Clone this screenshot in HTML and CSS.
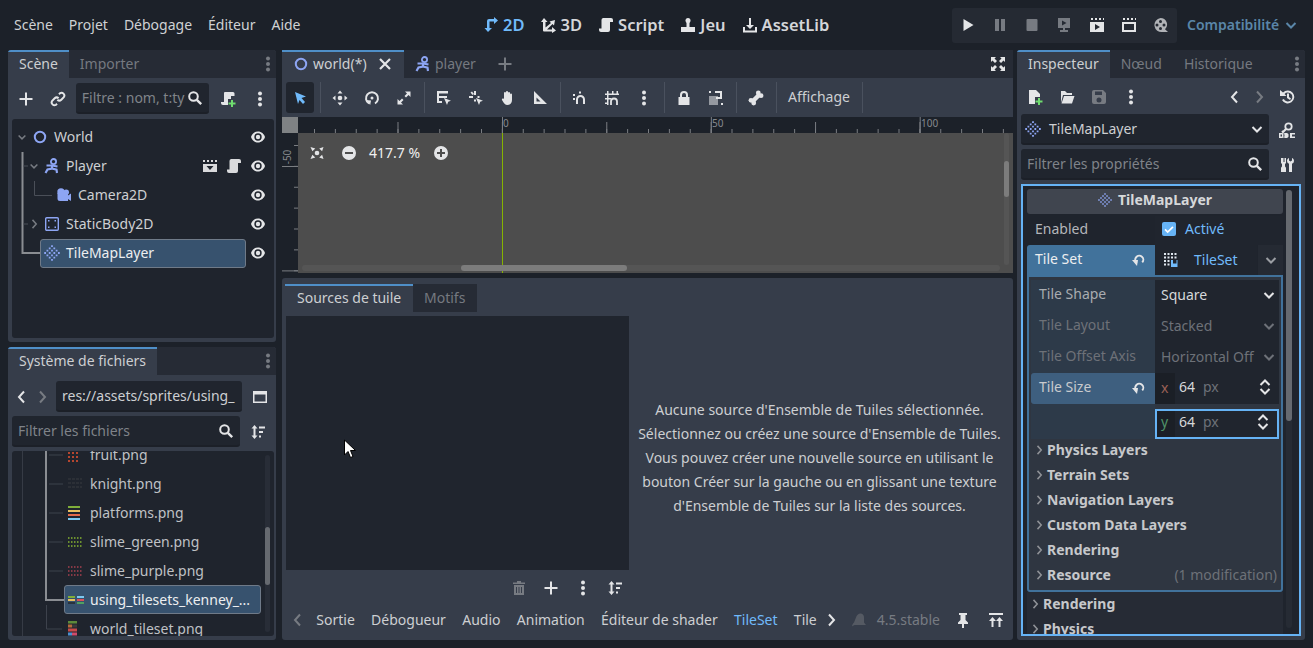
FILE: index.html
```html
<!DOCTYPE html>
<html lang="fr">
<head>
<meta charset="utf-8">
<title>world - Godot Engine</title>
<link rel="stylesheet" href="styles.css">
</head>
<body>
<svg class="defs" aria-hidden="true">
  <symbol id="i-plus" viewBox="0 0 16 16"><path d="M7 1.500h2V7h5.500v2H9v5.500H7V9H1.500V7H7z"/></symbol>
  <symbol id="i-link" viewBox="0 0 16 16"><path d="M9 3.200l.9-.9a2.800 2.800 0 0 1 3.900 3.900L11.300 8.700a2.800 2.800 0 0 1-3.900 0M7 12.800l-.9.9a2.800 2.800 0 0 1-3.900-3.900L4.700 7.300a2.800 2.800 0 0 1 3.900 0" fill="none" stroke="currentColor" stroke-width="2"/></symbol>
  <symbol id="i-search" viewBox="0 0 16 16"><circle cx="6.500" cy="6.500" r="4.300" fill="none" stroke="currentColor" stroke-width="2"/><path d="M9.800 9.800l4.400 4.400" fill="none" stroke="currentColor" stroke-width="2.400"/></symbol>
  <symbol id="i-dots" viewBox="0 0 16 16"><circle cx="8" cy="2.500" r="2"/><circle cx="8" cy="8" r="2"/><circle cx="8" cy="13.500" r="2"/></symbol>
  <symbol id="i-eye" viewBox="0 0 16 16"><path fill-rule="evenodd" d="M8 2.500c3.500 0 6 2.400 7 5.500-1 3.100-3.500 5.500-7 5.500S2 11.100 1 8c1-3.100 3.500-5.500 7-5.500zM8 4.300A3.700 3.700 0 1 0 8 11.700 3.700 3.700 0 0 0 8 4.300z"/><circle cx="8" cy="8" r="2.200"/></symbol>
  <symbol id="i-node" viewBox="0 0 16 16"><circle cx="8" cy="8" r="5.200" fill="none" stroke="currentColor" stroke-width="2"/></symbol>
  <symbol id="i-char" viewBox="0 0 16 16"><circle cx="9.500" cy="3.600" r="2.600" fill="none" stroke="currentColor" stroke-width="1.800"/><path d="M2.500 7.500H8l5.500 1M8 7.500v3L3.500 11.500 1.500 15M8 10.500l4.500 1.200.5 3.300" fill="none" stroke="currentColor" stroke-width="2.200"/></symbol>
  <symbol id="i-camera" viewBox="0 0 16 16"><circle cx="5" cy="5" r="3.700"/><circle cx="10.200" cy="5.200" r="2.800"/><path d="M1.500 6h10.500v2.500L15 6.500v7.500l-3-2V14H4a2.500 2.500 0 0 1-2.500-2.500z"/></symbol>
  <symbol id="i-static" viewBox="0 0 16 16"><rect x="1.700" y="1.700" width="12.600" height="12.600" rx="1" fill="none" stroke="currentColor" stroke-width="1.400"/><path d="M4 4h1.500v1.500H4zM10.500 4H12v1.500h-1.500zM4 10.500h1.500V12H4zM10.500 10.500H12V12h-1.500z"/></symbol>
  <symbol id="i-tiles" viewBox="0 0 16 16"><path d="M.2 7.100h1.800v1.800H.2zM2.500 4.800h1.800v1.800H2.500zM2.500 9.400h1.800v1.800H2.500zM4.800 2.500h1.800v1.800H4.800zM4.800 7.100h1.800v1.800H4.800zM4.800 11.700h1.800v1.800H4.800zM7.100 .2h1.800V2H7.100zM7.100 4.800h1.800v1.800H7.100zM7.100 9.400h1.800v1.800H7.100zM7.100 14h1.800v1.800H7.100zM9.400 2.500h1.800v1.800H9.400zM9.400 7.100h1.800v1.800H9.400zM9.400 11.700h1.800v1.800H9.400zM11.700 4.800h1.800v1.800h-1.800zM11.700 9.400h1.800v1.800h-1.800zM14 7.100h1.800v1.800H14z"/></symbol>
  <symbol id="i-script" viewBox="0 0 16 16"><path d="M5 1h8a2 2 0 0 1 2 2v2h-3v8a2 2 0 0 1-2 2H3a2 2 0 0 1-2-2v-1.500h2.500V3A2 2 0 0 1 5 1z"/></symbol>
  <symbol id="i-clap" viewBox="0 0 16 16"><path d="M1 2h2v2H1zM5 2h2v2H5zM9 2h2v2H9zM13 2h2v2h-2zM1 6h14v8H1zM4.500 8l3.500 4 3.500-4z" fill-rule="evenodd"/></symbol>
  <symbol id="i-left" viewBox="0 0 16 16"><path d="M10 2.500L5 8l5 5.500" fill="none" stroke="currentColor" stroke-width="2"/></symbol>
  <symbol id="i-right" viewBox="0 0 16 16"><path d="M6 2.500L11 8l-5 5.500" fill="none" stroke="currentColor" stroke-width="2"/></symbol>
  <symbol id="i-down" viewBox="0 0 16 16"><path d="M3.500 6l4.500 4.500L12.500 6" fill="none" stroke="currentColor" stroke-width="2"/></symbol>
  <symbol id="i-window" viewBox="0 0 16 16"><path fill-rule="evenodd" d="M1 2h14v12H1zM2.500 5.500v7h11v-7z"/></symbol>
  <symbol id="i-sort" viewBox="0 0 16 16"><path d="M4.500 1L7.500 4.500H5.500v7h2l-3 3.500-3-3.500h2v-7h-2zM9 2.500h6v2H9zM9 7h4v2H9zM9 11.500h2v2H9z"/></symbol>
  <symbol id="i-close" viewBox="0 0 16 16"><path d="M3 3l10 10M13 3L3 13" fill="none" stroke="currentColor" stroke-width="2.200"/></symbol>
  <symbol id="i-full" viewBox="0 0 16 16"><path d="M1 1h5L4.500 2.500 7 5 5 7 2.500 4.500 1 6zM15 1v5l-1.500-1.500L11 7 9 5l2.500-2.500L10 1zM1 15v-5l1.500 1.500L5 9l2 2-2.500 2.500L6 15zM15 15h-5l1.500-1.500L9 11l2-2 2.500 2.500L15 10z"/></symbol>
  <symbol id="i-arrow" viewBox="0 0 16 16"><path d="M3 2l11 4.500-4.500 1.500 3.500 4-2 2-3.500-4L6 14z"/></symbol>
  <symbol id="i-move" viewBox="0 0 16 16"><path d="M8 .5L10.500 3.500h-5zM8 15.500l-2.500-3h5zM.5 8l3-2.500v5zM15.500 8l-3 2.500v-5z"/><circle cx="8" cy="8" r="2.300"/></symbol>
  <symbol id="i-rotate" viewBox="0 0 16 16"><path d="M5 13.500a6 6 0 1 1 6 0" fill="none" stroke="currentColor" stroke-width="2"/><path d="M2 10l5 .5-.8 4.500z"/><circle cx="8" cy="8" r="1.500"/></symbol>
  <symbol id="i-scale" viewBox="0 0 16 16"><path d="M9 1.500h5.500V7L12.500 5 10 7.500 8.500 6 11 3.500zM7 14.500H1.500V9L3.500 11 6 8.500 7.500 10 5 12.500z"/></symbol>
  <symbol id="i-list" viewBox="0 0 16 16"><path fill-rule="evenodd" d="M1 1h11v2.500H3v2.500h8v2H3v3h3v2H1z"/><path d="M8 8l7 2.800-2.800.9L11 15z"/></symbol>
  <symbol id="i-pivot" viewBox="0 0 16 16"><path d="M6 1h2v4H6zM1 6h4v2H1zM9.500 6h2v2h-2zM6 9.500h2v2H6zM2.500 2.500l1.500-1 2 2.500-1.500 1zM8 8l7 2.800-2.800.9L11 15z"/></symbol>
  <symbol id="i-hand" viewBox="0 0 16 16"><path d="M4 7V3a1 1 0 0 1 2 0V2a1 1 0 0 1 2 0v1a1 1 0 0 1 2 0v1.500a1 1 0 0 1 2 0V10c0 3-2 5-4.500 5S4 13.500 2 10c-.5-1 1-2 2-1z"/></symbol>
  <symbol id="i-ruler" viewBox="0 0 16 16"><path fill-rule="evenodd" d="M2 1l13 13H2zM4.500 7.500v4h4z"/></symbol>
  <symbol id="i-snap" viewBox="0 0 16 16"><path d="M5 14V9.500a3.500 3.500 0 0 1 7 0V14" fill="none" stroke="currentColor" stroke-width="2"/><path d="M1 4h2v2H1zM1 8h2v2H1zM7 1.500h2v2H7z"/></symbol>
  <symbol id="i-gridsnap" viewBox="0 0 16 16"><path d="M3 1h1.500v14H3zM8 1h1.500v3H8zM12.500 1H14v3h-1.500zM1 3.500h14V5H1zM1 8h6v1.500H1zM1 12.500h3.500V14H1z"/><path d="M7 15v-3.500a3 3 0 0 1 6 0V15" fill="none" stroke="currentColor" stroke-width="1.800"/></symbol>
  <symbol id="i-lock" viewBox="0 0 16 16"><path fill-rule="evenodd" d="M8 1a4 4 0 0 1 4 4v2h1.500v8h-11V7H4V5a4 4 0 0 1 4-4zM8 3a2 2 0 0 0-2 2v2h4V5a2 2 0 0 0-2-2z"/></symbol>
  <symbol id="i-group" viewBox="0 0 16 16"><path d="M1 6h9v9H1z" opacity=".55"/><path d="M1 1h2v2H1zM7 1h7v8H8V7h4V3H7zM13 13h2v2h-2z"/></symbol>
  <symbol id="i-bone" viewBox="0 0 16 16"><path d="M4.500 11.500l7-7" stroke="currentColor" stroke-width="4.500"/><circle cx="10.300" cy="3" r="2.400"/><circle cx="13" cy="5.700" r="2.400"/><circle cx="3" cy="10.300" r="2.400"/><circle cx="5.700" cy="13" r="2.400"/></symbol>
  <symbol id="i-center" viewBox="0 0 16 16"><path d="M1.500 2l4.800 1.400-2.900 2.900zM14.500 2l-1.400 4.300-2.900-2.900zM1.500 14l1.900-4.300 2.900 2.900zM14.500 14l-4.300-1.400 2.900-2.900z"/><circle cx="8" cy="8" r="2.300"/></symbol>
  <symbol id="i-zoomout" viewBox="0 0 16 16"><path fill-rule="evenodd" d="M8 1a7 7 0 1 1 0 14A7 7 0 0 1 8 1zM4 7v2h8V7z"/></symbol>
  <symbol id="i-zoomin" viewBox="0 0 16 16"><path fill-rule="evenodd" d="M8 1a7 7 0 1 1 0 14A7 7 0 0 1 8 1zM7 4v3H4v2h3v3h2V9h3V7H9V4z"/></symbol>
  <symbol id="i-2d" viewBox="0 0 16 16"><path d="M5 15l-3.500-4H4V4a2 2 0 0 1 2-2h5V0l4 3.500L11 7V4.500H6.500V11H9z"/></symbol>
  <symbol id="i-3d" viewBox="0 0 16 16"><path d="M3 1l3.500 4H4.500v5.500L10 6 8.500 4.500 14 3l-1 5.500-1.500-1.500L6 12.500h5V10l4 3.500-4 2.500v-1.500H3a1 1 0 0 1-1-1V5H0z"/></symbol>
  <symbol id="i-game" viewBox="0 0 16 16"><circle cx="8" cy="3.500" r="2.500"/><path d="M6.500 5h3v5h-3zM1 10h14v5H1z"/></symbol>
  <symbol id="i-asset" viewBox="0 0 16 16"><path d="M7 1h2v7h3l-4 4-4-4h3zM1 10h2v3.500h10V10h2v5.500H1z"/></symbol>
  <symbol id="i-play" viewBox="0 0 16 16"><path d="M3.500 2l10 6-10 6z"/></symbol>
  <symbol id="i-pause" viewBox="0 0 16 16"><path d="M3 2h4v12H3zM9 2h4v12H9z"/></symbol>
  <symbol id="i-stop" viewBox="0 0 16 16"><rect x="2.500" y="2" width="11" height="12" rx="1"/></symbol>
  <symbol id="i-remote" viewBox="0 0 16 16"><path fill-rule="evenodd" d="M2 1h12v10H9v2h3v2H4v-2h3v-2H2zM6 3.500v5l4.500-2.500z"/></symbol>
  <symbol id="i-clapplay" viewBox="0 0 16 16"><path fill-rule="evenodd" d="M2 1h2v2H2zM6 1h2v2H6zM10 1h2v2h-2zM14 1h1v2h-1zM1 5h14v10H1zM6 7v6l5-3z"/></symbol>
  <symbol id="i-clapsq" viewBox="0 0 16 16"><path fill-rule="evenodd" d="M2 1h2v2H2zM6 1h2v2H6zM10 1h2v2h-2zM14 1h1v2h-1zM1 5h14v10H1zM3 7v6h10V7z"/></symbol>
  <symbol id="i-movie" viewBox="0 0 16 16"><path fill-rule="evenodd" d="M7.500 1a6.500 6.500 0 0 1 4.500 11.200l3 2.800H9.500a6.500 6.500 0 1 1-2-14zM7.500 3a1.500 1.500 0 1 0 0 3 1.500 1.500 0 0 0 0-3zM4 6.500a1.500 1.500 0 1 0 0 3 1.500 1.500 0 0 0 0-3zM11 6.500a1.500 1.500 0 1 0 0 3 1.500 1.500 0 0 0 0-3zM7.500 10a1.500 1.500 0 1 0 0 3 1.500 1.500 0 0 0 0-3z"/></symbol>
  <symbol id="i-filenew" viewBox="0 0 16 16"><path d="M2 1h7l4 4v3H8v7H2z"/><path d="M11 9h2v2.500h2.500v2H13V16h-2v-2.500H8.500v-2H11z" fill="#6fdc6f"/></symbol>
  <symbol id="i-scriptnew" viewBox="0 0 16 16"><path d="M5 1h8a1.500 1.500 0 0 1 1.500 1.500V5H11v3H8v6H3a2 2 0 0 1-2-2v-1h3V2a1 1 0 0 1 1-1z"/><path d="M11 9h2v2.500h2.500v2H13V16h-2v-2.500H8.500v-2H11z" fill="#6fdc6f"/></symbol>
  <symbol id="i-open" viewBox="0 0 16 16"><path fill-rule="evenodd" d="M2 2h4l2 2h5v2H4L2 14zM5 7h10.500L13 14.500H2.500z"/></symbol>
  <symbol id="i-save" viewBox="0 0 16 16"><path fill-rule="evenodd" d="M1 3a2 2 0 0 1 2-2h9l3 3v9a2 2 0 0 1-2 2H3a2 2 0 0 1-2-2zM4 2.500v3.500h7V2.500zM8 8.500a2.500 2.500 0 1 0 0 5 2.500 2.500 0 0 0 0-5z"/></symbol>
  <symbol id="i-history" viewBox="0 0 16 16"><path d="M4 3.500A6.500 6.500 0 1 1 3 11l1.800-1A4.500 4.500 0 1 0 5.500 5L7.500 7H1V1z"/><path d="M8 4.500h2V8l2 1.500-1 1.500-3-2z"/></symbol>
  <symbol id="i-doc" viewBox="0 0 16 16"><circle cx="9.500" cy="4.500" r="3.200" fill="none" stroke="currentColor" stroke-width="1.800"/><path d="M7 7L4 10l-1-1" fill="none" stroke="currentColor" stroke-width="2"/><path d="M0 11h3a2 2 0 0 1 0 5H0zM1.500 12.500v2H3v-2zM6 11h1.500a2 2 0 0 1 2 2.500A2 2 0 0 1 7.500 16H6a2 2 0 0 1-1.500-2.500A2 2 0 0 1 6 11zM11 11h5v1.500h-3v2h3V16h-5z" fill-rule="evenodd"/></symbol>
  <symbol id="i-tools" viewBox="0 0 16 16"><path d="M3 1h1.500v4h1V1H7v5L6 7v2.500a2 2 0 0 1 1 1.700V15H2v-3.800a2 2 0 0 1 1-1.700V7L2 6V1zM10 1v2.500l1.500 1L13 3.500V1c1.500.5 2 2 2 3a3 3 0 0 1-2 2.800V15h-3V6.800A3 3 0 0 1 8 4c0-1 .5-2.500 2-3z"/></symbol>
  <symbol id="i-revert" viewBox="0 0 16 16"><path d="M5 12.500A5 5 0 1 1 12 12l-1.500-1.300A3 3 0 1 0 6.500 11z"/><path d="M1 9h6l-1 6z"/></symbol>
  <symbol id="i-check" viewBox="0 0 16 16"><path d="M3.500 8.500l3 3 6-6" fill="none" stroke="#fff" stroke-width="2"/></symbol>
  <symbol id="i-tileset" viewBox="0 0 16 16"><path d="M1 1h2v2H1zM4.500 1h2v2h-2zM8 1h2v2H8zM11.500 1h2v2h-2zM1 4.500h2v2H1zM4.500 4.500h2v2h-2zM8 4.500h2v2H8zM11.500 4.500h2v2h-2zM1 8h2v2H1zM4.500 8h2v2h-2zM1 11.500h2v2H1zM4.500 11.500h2v2h-2z"/><path d="M8 8h2v3.500h3.500V8h1v7H8z" fill="#70bafa"/></symbol>
  <symbol id="i-updown" viewBox="0 0 16 16"><path d="M3.500 6L8 1.500 12.500 6M3.500 10L8 14.500 12.500 10" fill="none" stroke="currentColor" stroke-width="2"/></symbol>
  <symbol id="i-trash" viewBox="0 0 16 16"><path fill-rule="evenodd" d="M6 1h4v1.500h4V4H2V2.500h4zM3 5h10v10H3zM5 7v6h1V7zM7.500 7v6h1V7zM10 7v6h1V7z"/></symbol>
  <symbol id="i-bell" viewBox="0 0 16 16"><path d="M10 1.500c2 .5 3 2 3 4v5l2 2.500H5c-2 0-3 .5-4 1.500 0-2 1-3 2-4l2-5c.5-2.500 3-4.500 5-4z"/></symbol>
  <symbol id="i-pin" viewBox="0 0 16 16"><path d="M4 1h8v2h-1.500v5L13 10.500V12H9v4H7v-4H3v-1.500L5.500 8V3H4z"/></symbol>
  <symbol id="i-expand" viewBox="0 0 16 16"><path d="M1 1h14v2H1zM4.500 5L8 9H5.500v6h-2V9H1zM11.500 5L15 9h-2.500v6h-2V9H8z"/></symbol>
</svg>

<header class="topbar">
  <nav class="menu">
    <span>Scène</span><span>Projet</span><span>Débogage</span><span>Éditeur</span><span>Aide</span>
  </nav>
  <nav class="screens">
    <span class="screen on"><svg class="ico"><use href="#i-2d"/></svg>2D</span>
    <span class="screen"><svg class="ico"><use href="#i-3d"/></svg>3D</span>
    <span class="screen"><svg class="ico"><use href="#i-script"/></svg>Script</span>
    <span class="screen"><svg class="ico"><use href="#i-game"/></svg>Jeu</span>
    <span class="screen"><svg class="ico"><use href="#i-asset"/></svg>AssetLib</span>
  </nav>
  <div class="runbar">
    <svg class="ico"><use href="#i-play"/></svg>
    <svg class="ico dim"><use href="#i-pause"/></svg>
    <svg class="ico dim"><use href="#i-stop"/></svg>
    <svg class="ico dim"><use href="#i-remote"/></svg>
    <svg class="ico"><use href="#i-clapplay"/></svg>
    <svg class="ico"><use href="#i-clapsq"/></svg>
    <svg class="ico mid"><use href="#i-movie"/></svg>
  </div>
  <div class="renderer">Compatibilité<svg class="ico"><use href="#i-down"/></svg></div>
</header>

<main class="workspace">
  <div class="col-left">
    <section class="dock scene-dock">
      <div class="tabs">
        <span class="tab on">Scène</span><span class="tab">Importer</span>
        <svg class="ico tab-menu"><use href="#i-dots"/></svg>
      </div>
      <div class="scene-tools">
        <span class="btn"><svg class="ico"><use href="#i-plus"/></svg></span>
        <span class="btn"><svg class="ico"><use href="#i-link"/></svg></span>
        <label class="field scene-filter"><span class="ph">Filtre : nom, t:ty</span><svg class="ico"><use href="#i-search"/></svg></label>
        <span class="btn"><svg class="ico"><use href="#i-scriptnew"/></svg></span>
        <span class="btn"><svg class="ico"><use href="#i-dots"/></svg></span>
      </div>
      <div class="tree scene-tree">
        <svg class="tree-lines" width="262" height="219">
          <path d="M10.500 33V134H29" fill="none" stroke="#8a8d92" stroke-width="2"/>
          <path d="M11 47h5M11 105h5M22.500 62v14.500H40" fill="none" stroke="#4a4f58"/>
        </svg>
        <div class="row d0"><svg class="chev dim"><use href="#i-down"/></svg><svg class="ico blue"><use href="#i-node"/></svg><span>World</span><svg class="ico eye"><use href="#i-eye"/></svg></div>
        <div class="row d1"><svg class="chev dim"><use href="#i-down"/></svg><svg class="ico blue"><use href="#i-char"/></svg><span>Player</span><span class="row-extra"><svg class="ico"><use href="#i-clap"/></svg><svg class="ico"><use href="#i-script"/></svg></span><svg class="ico eye"><use href="#i-eye"/></svg></div>
        <div class="row d2"><svg class="ico blue"><use href="#i-camera"/></svg><span>Camera2D</span><svg class="ico eye"><use href="#i-eye"/></svg></div>
        <div class="row d1"><svg class="chev dim"><use href="#i-right"/></svg><svg class="ico blue"><use href="#i-static"/></svg><span>StaticBody2D</span><svg class="ico eye"><use href="#i-eye"/></svg></div>
        <div class="row d1s"><div class="sel"><svg class="ico blue"><use href="#i-tiles"/></svg><span>TileMapLayer</span></div><svg class="ico eye"><use href="#i-eye"/></svg></div>
      </div>
    </section>

    <section class="dock fs-dock">
      <div class="tabs">
        <span class="tab on">Système de fichiers</span>
        <svg class="ico tab-menu"><use href="#i-dots"/></svg>
      </div>
      <div class="fs-path">
        <svg class="ico"><use href="#i-left"/></svg>
        <svg class="ico dim"><use href="#i-right"/></svg>
        <div class="field path-field">res://assets/sprites/using_</div>
        <svg class="ico"><use href="#i-window"/></svg>
      </div>
      <div class="fs-filter">
        <label class="field filter-grow"><span class="ph">Filtrer les fichiers</span><svg class="ico"><use href="#i-search"/></svg></label>
        <svg class="ico"><use href="#i-sort"/></svg>
      </div>
      <div class="tree fs-tree">
        <svg class="tree-lines" width="262" height="185">
          <path d="M10.500 0V185" fill="none" stroke="#363b45"/>
          <path d="M34 0V149H52" fill="none" stroke="#8a8d92" stroke-width="2"/>
          <path d="M37 4h14M37 33h14M37 62h14M37 91h14M37 120h14M34.500 154v24H50" fill="none" stroke="#3d424c"/>
        </svg>
        <div class="fs-list">
          <div class="fs-row"><svg class="thumb" viewBox="0 0 16 16"><path d="M0 2H10M0 6H10M0 10H10M0 14H10" stroke="#b5462f" stroke-width="2" stroke-dasharray="2 2"/></svg><span>fruit.png</span></div>
          <div class="fs-row"><svg class="thumb" viewBox="0 0 16 16"><path d="M0 3H14M0 7H14M0 11H14" stroke="#2b2f36" stroke-width="2" stroke-dasharray="3 1"/></svg><span>knight.png</span></div>
          <div class="fs-row"><svg class="thumb" viewBox="0 0 16 16"><path d="M0 2H12" stroke="#7fae3a" stroke-width="2"/><path d="M0 6H12" stroke="#e8c060" stroke-width="2"/><path d="M0 10H12" stroke="#e06a4a" stroke-width="2"/><path d="M0 14H12" stroke="#7cc8ef" stroke-width="2"/></svg><span>platforms.png</span></div>
          <div class="fs-row"><svg class="thumb" viewBox="0 0 16 16"><path d="M0 4H15M0 8H15M0 12H15" stroke="#86b530" stroke-width="1.500" stroke-dasharray="1.500 1.500"/></svg><span>slime_green.png</span></div>
          <div class="fs-row"><svg class="thumb" viewBox="0 0 16 16"><path d="M0 4H15M0 8H15M0 12H15" stroke="#a8404f" stroke-width="1.500" stroke-dasharray="1.500 1.500"/></svg><span>slime_purple.png</span></div>
          <div class="fs-row sel"><svg class="thumb" viewBox="0 0 16 16"><path d="M0 5H7" stroke="#7fae3a" stroke-width="2"/><path d="M0 8H7" stroke="#e8c060" stroke-width="2"/><path d="M0 11H7" stroke="#29323c" stroke-width="2"/><path d="M9 5H16" stroke="#7cc8ef" stroke-width="2"/><path d="M9 8H16" stroke="#d8505a" stroke-width="2"/><path d="M9 11H16" stroke="#50a060" stroke-width="2"/></svg><span>using_tilesets_kenney_...</span></div>
          <div class="fs-row"><svg class="thumb" viewBox="0 0 16 16"><path d="M0 1H9" stroke="#5d8a3a" stroke-width="3"/><path d="M0 5H4" stroke="#b56a3a" stroke-width="3"/><path d="M4 5H9" stroke="#3a3a3a" stroke-width="3"/><path d="M0 9H9" stroke="#c84a4a" stroke-width="3"/><path d="M0 13H4" stroke="#4a90d0" stroke-width="3"/><path d="M4 13H9" stroke="#d04a6a" stroke-width="3"/></svg><span>world_tileset.png</span></div>
        </div>
        <div class="fs-scroll"><i></i></div>
      </div>
    </section>
  </div>

  <div class="col-mid">
    <section class="editor-top">
      <div class="tabs">
        <span class="tab on doc-tab"><svg class="ico blue"><use href="#i-node"/></svg>world(*)<svg class="ico doc-close"><use href="#i-close"/></svg></span>
        <span class="tab doc-tab"><svg class="ico blue"><use href="#i-char"/></svg>player</span>
        <svg class="ico doc-add dim"><use href="#i-plus"/></svg>
        <svg class="ico doc-full"><use href="#i-full"/></svg>
      </div>
      <div class="toolbar">
        <span class="tool active"><svg class="ico sky"><use href="#i-arrow"/></svg></span>
        <i class="sep"></i>
        <span class="tool"><svg class="ico"><use href="#i-move"/></svg></span>
        <span class="tool"><svg class="ico"><use href="#i-rotate"/></svg></span>
        <span class="tool"><svg class="ico"><use href="#i-scale"/></svg></span>
        <i class="sep"></i>
        <span class="tool"><svg class="ico"><use href="#i-list"/></svg></span>
        <span class="tool"><svg class="ico"><use href="#i-pivot"/></svg></span>
        <span class="tool"><svg class="ico"><use href="#i-hand"/></svg></span>
        <span class="tool"><svg class="ico"><use href="#i-ruler"/></svg></span>
        <i class="sep"></i>
        <span class="tool"><svg class="ico"><use href="#i-snap"/></svg></span>
        <span class="tool"><svg class="ico"><use href="#i-gridsnap"/></svg></span>
        <span class="tool"><svg class="ico"><use href="#i-dots"/></svg></span>
        <i class="sep"></i>
        <span class="tool"><svg class="ico"><use href="#i-lock"/></svg></span>
        <span class="tool"><svg class="ico"><use href="#i-group"/></svg></span>
        <i class="sep"></i>
        <span class="tool"><svg class="ico"><use href="#i-bone"/></svg></span>
        <i class="sep"></i>
        <span class="tool-text">Affichage</span>
        <i class="sep"></i>
      </div>
      <div class="canvas-area">
        <div class="ruler-top">
          <div class="ruler-corner"></div>
          <div class="ruler-h">
            <span class="mark" style="left:203px">0</span>
            <span class="mark" style="left:412px">50</span>
            <span class="mark" style="left:621px">100</span>
          </div>
        </div>
        <div class="canvas-row">
          <div class="ruler-v"><span class="vmark">-50</span></div>
          <div class="canvas">
            <i class="axis"></i>
            <div class="zoom-bar">
              <svg class="ico"><use href="#i-center"/></svg>
              <svg class="ico zoom-btn"><use href="#i-zoomout"/></svg>
              <span class="zoom-val">417.7 %</span>
              <svg class="ico"><use href="#i-zoomin"/></svg>
            </div>
            <div class="vscroll"><i></i></div>
            <div class="hscroll"><i></i></div>
          </div>
        </div>
      </div>
    </section>

    <section class="bottom-dock">
      <div class="tileset-tabs">
        <span class="tab on">Sources de tuile</span><span class="tab">Motifs</span>
      </div>
      <div class="tileset-body">
        <div class="tileset-left">
          <div class="source-list"></div>
          <div class="source-tools">
            <svg class="ico dim"><use href="#i-trash"/></svg>
            <svg class="ico"><use href="#i-plus"/></svg>
            <svg class="ico"><use href="#i-dots"/></svg>
            <svg class="ico"><use href="#i-sort"/></svg>
          </div>
        </div>
        <p class="hint">Aucune source d'Ensemble de Tuiles sélectionnée.<br>Sélectionnez ou créez une source d'Ensemble de Tuiles.<br>Vous pouvez créer une nouvelle source en utilisant le<br>bouton Créer sur la gauche ou en glissant une texture<br>d'Ensemble de Tuiles sur la liste des sources.</p>
      </div>
      <div class="bottom-bar">
        <svg class="ico dim bar-prev"><use href="#i-left"/></svg>
        <span>Sortie</span><span>Débogueur</span><span>Audio</span><span>Animation</span><span>Éditeur de shader</span><span class="sky">TileSet</span><span>Tile</span>
        <svg class="ico bar-next"><use href="#i-right"/></svg>
        <svg class="ico faint bar-bell"><use href="#i-bell"/></svg>
        <span class="version">4.5.stable</span>
        <svg class="ico bar-pin"><use href="#i-pin"/></svg>
        <svg class="ico"><use href="#i-expand"/></svg>
      </div>
      <svg class="mouse" width="14" height="20" viewBox="0 0 14 20"><path d="M1.500 1v15l3.500-3.500 2.500 6 2.500-1-2.500-6h5z" fill="#fff" stroke="#000"/></svg>
    </section>
  </div>

  <section class="dock col-right">
    <div class="tabs">
      <span class="tab on">Inspecteur</span><span class="tab">Nœud</span><span class="tab">Historique</span>
      <svg class="ico tab-menu"><use href="#i-dots"/></svg>
    </div>
    <div class="insp-tools">
      <svg class="ico"><use href="#i-filenew"/></svg>
      <svg class="ico"><use href="#i-open"/></svg>
      <svg class="ico dim"><use href="#i-save"/></svg>
      <svg class="ico"><use href="#i-dots"/></svg>
      <svg class="ico insp-back"><use href="#i-left"/></svg>
      <svg class="ico dim insp-next"><use href="#i-right"/></svg>
      <svg class="ico"><use href="#i-history"/></svg>
    </div>
    <div class="insp-line">
      <div class="field obj-field"><svg class="ico blue"><use href="#i-tiles"/></svg><span>TileMapLayer</span><svg class="ico obj-chev"><use href="#i-down"/></svg></div>
      <svg class="ico"><use href="#i-doc"/></svg>
    </div>
    <div class="insp-line">
      <label class="field filter-grow"><span class="ph">Filtrer les propriétés</span><svg class="ico"><use href="#i-search"/></svg></label>
      <svg class="ico"><use href="#i-tools"/></svg>
    </div>
    <div class="props">
      <div class="props-scroll"><i></i></div>
      <div class="prop-head"><svg class="ico blue"><use href="#i-tiles"/></svg>TileMapLayer</div>
      <div class="prop prop-first">
        <span class="prop-name">Enabled</span>
        <div class="prop-val check-val"><i class="check"><svg class="ico"><use href="#i-check"/></svg></i><span class="sky">Activé</span></div>
      </div>
      <div class="prop prop-res">
        <span class="prop-name mod">Tile Set<svg class="ico"><use href="#i-revert"/></svg></span>
        <div class="prop-val res-val"><svg class="ico blue-w"><use href="#i-tileset"/></svg><span class="sky">TileSet</span></div>
        <div class="prop-val res-chev"><svg class="ico"><use href="#i-down"/></svg></div>
      </div>
      <div class="subres">
        <div class="sub"><span class="sub-name">Tile Shape</span><div class="sub-val">Square<svg class="ico"><use href="#i-down"/></svg></div></div>
        <div class="sub off"><span class="sub-name">Tile Layout</span><div class="sub-val">Stacked<svg class="ico"><use href="#i-down"/></svg></div></div>
        <div class="sub off"><span class="sub-name">Tile Offset Axis</span><div class="sub-val">Horizontal Off<svg class="ico"><use href="#i-down"/></svg></div></div>
        <div class="sub sub-size">
          <span class="sub-name mod">Tile Size<svg class="ico"><use href="#i-revert"/></svg></span>
          <div class="sub-val spin"><b class="axis-x">x</b><em>64</em><u>px</u><svg class="ico"><use href="#i-updown"/></svg></div>
        </div>
        <div class="sub sub-size2">
          <span class="sub-name"></span>
          <div class="sub-val spin focus"><b class="axis-y">y</b><em>64</em><u>px</u><svg class="ico"><use href="#i-updown"/></svg></div>
        </div>
        <div class="group"><svg class="chev"><use href="#i-right"/></svg>Physics Layers</div>
        <div class="group"><svg class="chev"><use href="#i-right"/></svg>Terrain Sets</div>
        <div class="group"><svg class="chev"><use href="#i-right"/></svg>Navigation Layers</div>
        <div class="group"><svg class="chev"><use href="#i-right"/></svg>Custom Data Layers</div>
        <div class="group"><svg class="chev"><use href="#i-right"/></svg>Rendering</div>
        <div class="group"><svg class="chev"><use href="#i-right"/></svg>Resource<span class="group-note">(1 modification)</span></div>
      </div>
      <div class="outer-groups">
        <div class="group"><svg class="chev"><use href="#i-right"/></svg>Rendering</div>
        <div class="group"><svg class="chev"><use href="#i-right"/></svg>Physics</div>
      </div>
    </div>
  </section>
</main>
</body>
</html>
```

FILE: styles.css
```css
* { box-sizing: border-box; }
html, body { margin: 0; height: 100%; }
body {
  width: 1313px;
  height: 648px;
  overflow: hidden;
  background: #1c2129;
  color: #cdcfd2;
  font-family: "Noto Sans", sans-serif;
  font-size: 14px;
  line-height: 20px;
}
i, em, u, b { font-style: normal; text-decoration: none; font-weight: normal; }
.defs { display: none; }

.ico { width: 16px; height: 16px; flex: none; fill: currentColor; color: #e4e5e7; display: block; }
.ico.dim { color: #777b82; }
.ico.mid { color: #b0b2b6; }
.ico.faint { color: #555a63; }
.ico.blue { color: #8da5f3; }
.ico.sky { color: #70bafa; }
.sky { color: #70bafa; }
.chev { width: 12px; height: 12px; flex: none; fill: currentColor; color: #8f9297; }
.chev.dim { color: #777b82; }

/* top bar */
.topbar { display: flex; align-items: center; height: 50px; }
.menu { display: flex; gap: 16px; width: 483px; padding-left: 14px; color: #cfd1d4; }
.screens { display: flex; gap: 16px; width: 469px; font-size: 16.5px; font-weight: 600; color: #d4d6d9; }
.screen { display: flex; align-items: center; gap: 4px; }
.screen.on, .screen.on .ico { color: #70bafa; }
.runbar { display: flex; align-items: center; justify-content: space-between; width: 225px; height: 35px; padding: 0 8px; background: #252a33; border-radius: 3px; }
.renderer { display: flex; align-items: center; gap: 4px; margin-left: 10px; font-weight: 600; color: #5a86a8; }
.renderer .ico { color: #5a86a8; }

/* layout */
.workspace { display: flex; height: 590px; padding-left: 8px; }
.col-left { display: flex; flex-direction: column; gap: 5px; width: 268px; }
.col-mid { display: flex; flex-direction: column; gap: 5px; width: 731px; margin-left: 6px; }
.col-right { width: 288px; margin-left: 4px; }

.dock { background: #363d4a; border-radius: 3px; overflow: hidden; }
.scene-dock { height: 292px; }
.fs-dock { height: 293px; }

/* tabs */
.tabs { display: flex; align-items: center; height: 28px; background: #262b35; color: #757980; }
.tab { display: flex; align-items: center; height: 28px; padding: 0 11px; color: #757980; }
.tab.on { background: #363d4a; border-top: 2px solid #4f8fc8; padding-bottom: 2px; color: #cdcfd2; }
.tab-menu { margin-left: auto; color: #777b82; }

.field { display: flex; align-items: center; height: 31px; padding: 0 6px; background: #20252e; border-bottom: 2px solid #1c2028; border-radius: 3px; }
.ph { flex: 1; color: #7f8389; white-space: nowrap; overflow: hidden; }

/* scene dock */
.scene-tools { display: flex; align-items: center; height: 41px; }
.btn { display: flex; justify-content: center; width: 32px; }
.scene-filter { width: 134px; margin: 0 3px 0 2px; padding-right: 6px; }
.scene-tools .btn:first-child { margin-left: 2px; }

.tree { position: relative; margin: 0 2px 0 4px; background: #1f242d; border-radius: 3px; overflow: hidden; }
.tree-lines { position: absolute; top: 0; left: 0; }
.scene-tree { height: 219px; padding-top: 3px; }
.row { position: relative; display: flex; align-items: center; height: 29px; padding-right: 8px; gap: 6px; }
.row .chev { margin-right: -2px; }
.row .eye { margin-left: auto; }
.d0 { padding-left: 4px; }
.d1 { padding-left: 16px; }
.d2 { padding-left: 44px; }
.d1s { padding-left: 28px; gap: 4px; }
.row-extra { display: flex; gap: 8px; margin-left: auto; margin-right: 2px; }
.row-extra + .eye { margin-left: 0; }
.row-extra .ico { color: #d9dadc; }
.sel { background: #37526e; border: 1px solid #6f7a88; border-radius: 3px; color: #eceef0; }
.row .sel { display: flex; align-items: center; gap: 6px; width: 206px; height: 29px; margin-top: 2px; padding: 0 0 2px 3px; }

/* file system */
.fs-path { display: flex; align-items: center; height: 37px; padding: 6px 10px 0 6px; gap: 4px; }
.fs-path .ico:last-child { margin-left: 6px; }
.path-field { flex: none; width: 186px; margin-left: 2px; white-space: nowrap; overflow: hidden; }
.fs-filter { display: flex; align-items: center; height: 35px; padding: 4px 10px 0 4px; }
.filter-grow { width: 230px; }
.fs-filter .ico:last-child { margin-left: 10px; }
.fs-tree { height: 185px; margin-top: 4px; }
.fs-list { position: relative; margin-top: -11px; padding-left: 52px; }
.fs-row { display: flex; align-items: center; gap: 6px; width: 197px; height: 29px; padding-left: 4px; color: #bfc1c5; white-space: nowrap; }
.fs-row.sel { padding-left: 3px; color: #eceef0; }
.thumb { width: 16px; height: 16px; flex: none; fill: none; }
.fs-scroll { position: absolute; top: 4px; right: 4px; bottom: 4px; width: 5px; background: #282d37; border-radius: 3px; }
.fs-scroll i { display: block; height: 58px; margin-top: 72px; background: #666a70; border-radius: 3px; }

/* 2d editor */
.editor-top { height: 223px; }
.doc-tab { gap: 4px; padding: 0 11px; }
.doc-tab.on { width: 122px; }
.doc-close { margin-left: 6px; }
.doc-add { margin-left: 10px; }
.doc-full { margin-left: auto; margin-right: 7px; }
.toolbar { display: flex; align-items: center; height: 39px; padding-left: 2px; background: #363d4a; }
.tool { display: flex; align-items: center; justify-content: center; width: 32px; height: 31px; }
.tool.active { width: 28px; margin: 0 2px; background: #20252e; border-radius: 3px; }
.sep { width: 1px; height: 31px; margin: 0 3px 0 4px; background: #4a515e; }
.tool-text { width: 78px; padding-bottom: 2px; text-align: center; }

.canvas-area { height: 156px; }
.ruler-top { display: flex; height: 16px; background: #1c2129; }
.ruler-corner { width: 16px; background: #7f8284; }
.ruler-h {
  position: relative;
  flex: 1;
  background-image:
    linear-gradient(90deg, #7a7d82 1px, transparent 1px),
    linear-gradient(90deg, #7a7d82 1px, transparent 1px),
    linear-gradient(90deg, #7a7d82 1px, transparent 1px);
  background-size: 20.885px 4px, 104.4px 11px, 208.85px 16px;
  background-position: 16px bottom, 99.500px bottom, 204px bottom;
  background-repeat: repeat-x;
}
.mark { position: absolute; top: 0; padding-left: 2px; font-size: 10px; line-height: 12px; color: #85888d; }
.canvas-row { display: flex; height: 140px; }
.ruler-v {
  position: relative;
  width: 16px;
  background-color: #1c2129;
  background-image:
    linear-gradient(#7a7d82 1px, transparent 1px),
    linear-gradient(#7a7d82 1px, transparent 1px);
  background-size: 4px 20.885px, 16px 104.4px;
  background-position: right 12px, right 33px;
  background-repeat: repeat-y;
}
.vmark { position: absolute; top: 18px; left: -2px; font-size: 10px; line-height: 12px; color: #85888d; transform: rotate(-90deg); }
.canvas { position: relative; flex: 1; background: #4d4d4d; overflow: hidden; }
.axis { position: absolute; top: 0; bottom: 0; left: 204px; width: 1px; background: #85b300; }
.zoom-bar { position: absolute; top: 10px; left: 11px; display: flex; align-items: center; }
.zoom-btn { margin-left: 16px; }
.zoom-val { width: 76px; padding-left: 12px; color: #f0f0f0; }
.vscroll { position: absolute; top: 0; right: 4px; bottom: 8px; width: 5px; background: #555555; border-radius: 3px; }
.vscroll i { display: block; height: 36px; margin-top: 28px; background: #7c7c7c; border-radius: 3px; }
.hscroll { position: absolute; left: 4px; right: 13px; bottom: 2px; height: 6px; background: #555555; border-radius: 3px; }
.hscroll i { display: block; width: 166px; height: 6px; margin-left: 159px; background: #7c7c7c; border-radius: 3px; }

/* bottom dock */
.bottom-dock { position: relative; display: flex; flex-direction: column; height: 362px; padding: 6px 3px 0; background: #363d4a; border-radius: 3px; }
.tileset-tabs { display: flex; height: 28px; }
.tileset-tabs .tab { background: #262b35; }
.tileset-tabs .tab.on { width: 128px; padding-left: 12px; background: #363d4a; }
.tileset-tabs .tab:last-child { width: 64px; padding: 0 11px; }
.tileset-body { display: flex; height: 288px; margin-top: 4px; }
.tileset-left { flex: none; width: 343px; margin-left: 1px; }
.source-list { height: 254px; background: #20252e; }
.source-tools { display: flex; justify-content: flex-end; gap: 16px; margin-top: 10px; padding-right: 6px; }
.hint { flex: 1; margin: 82px 0 0; line-height: 24px; text-align: center; color: #cdcfd2; }
.bottom-bar { display: flex; align-items: center; gap: 16.3px; height: 30px; padding: 2px 0 0 2px; color: #cdcfd2; white-space: nowrap; }
.bar-prev { margin: 0 -6px 0 3px; }
.bar-next { margin: 0 -4px 0 -10px; }
.bar-bell { margin-right: -7px; }
.version { color: #777b82; }
.bar-pin { margin-left: -1px; }
.mouse { position: absolute; top: 161px; left: 61px; }

/* inspector */
.col-right { position: relative; height: 590px; }
.insp-tools { display: flex; align-items: center; height: 36px; padding: 2px 10px 0; gap: 16px; }
.insp-back { margin-left: auto; margin-right: -8px; }
.insp-next { margin-right: -4px; }
.insp-line { display: flex; align-items: center; gap: 10px; height: 31px; margin-bottom: 4px; padding-left: 4px; }
.obj-field, .insp-line .filter-grow { width: 248px; }
.obj-field { gap: 8px; padding: 0 4px; }
.obj-chev { margin-left: auto; }
.props { position: relative; height: 452px; margin: 0 4px; padding: 3px 4px; background: #1f242d; border: 2px solid #66b3f5; overflow: hidden; }
.props-scroll { position: absolute; top: 4px; right: 7px; bottom: 6px; width: 6px; background: #262b34; border-radius: 3px; }
.props-scroll i { display: block; height: 231px; background: #666a70; border-radius: 3px; }
.prop-head { display: flex; align-items: center; justify-content: center; gap: 6px; width: 256px; height: 25px; padding-bottom: 3px; background: #40454f; border-radius: 3px; font-weight: 700; color: #d6d8da; }
.prop-head .ico { width: 14px; height: 14px; }
.prop { display: flex; width: 256px; height: 30px; }
.prop-first { height: 29px; margin-top: 2px; }
.prop-name { display: flex; align-items: center; justify-content: space-between; width: 128px; padding: 0 8px 4px 8px; color: #b4b6ba; }
.prop-name .ico { color: #e4e5e7; }
.prop-name.mod { background: #41729b; color: #eceef0; border-radius: 3px 0 0 0; padding-bottom: 2px; }
.prop-val { display: flex; align-items: center; padding-bottom: 1px; background: #20252e; }
.check-val { flex: 1; gap: 9px; padding: 0 0 3px 7px; }
.check { display: block; width: 14px; height: 14px; background: #66b3f5; border-radius: 2px; }
.check .ico { width: 14px; height: 14px; }
.res-val { width: 102px; padding-left: 8px; gap: 15px; }
.blue-w { color: #dfe6ee; }
.res-chev { flex: 1; justify-content: center; margin-left: 1px; background: #252a33; }
.res-chev .ico { color: #9b9ea3; }
.subres { width: 256px; height: 317px; padding: 3px 2px 0; background: #2f3641; border: 2px solid #41729b; border-radius: 0 0 3px 3px; }
.sub { display: flex; height: 31px; }
.sub-name { display: flex; align-items: center; justify-content: space-between; width: 124px; padding: 0 8px 3px 8px; background: #2d3a49; color: #a9acb0; }
.sub-name.mod { background: #3e5f7f; color: #c9cbce; border-radius: 3px 0 0 3px; }
.sub-name.mod .ico { color: #e4e5e7; }
.sub-val { display: flex; align-items: center; justify-content: space-between; flex: 1; padding: 0 2px 2px 6px; background: #20252e; color: #d6d8da; white-space: nowrap; overflow: hidden; }
.sub.off .sub-name, .sub.off .sub-val { color: #6d7178; }
.sub.off .sub-val .ico { color: #6d7178; }
.spin { justify-content: flex-start; padding: 0 0 4px; }
.spin b { align-self: stretch; width: 20px; margin-bottom: -4px; padding-left: 6px; background: #1b1f26; line-height: 29px; }
.spin em { margin-left: 4px; }
.spin u { margin-left: 8px; color: #6d7178; }
.spin .ico { margin-left: auto; margin-right: 6px; }
.axis-x { color: #9c6156; }
.axis-y { color: #4f9268; }
.sub-size2 { height: 35px; margin-bottom: -1px; }
.sub-size2 .sub-name { height: 100%; }
.sub-size2 .sub-val { height: 30px; margin-top: 5px; }
.spin.focus { padding-bottom: 4px; border: 2px solid #66b3f5; }
.focus b { width: 18px; padding-left: 4px; line-height: 22px; }
.group { display: flex; align-items: center; height: 25px; padding: 0 0 2px 4px; font-weight: 700; color: #c6c8cb; white-space: nowrap; }
.group .chev { margin: 0 2px 0 -2px; }
.group-note { margin-left: auto; padding-right: 2px; font-weight: 400; color: #6d7178; }
.outer-groups { width: 256px; background: #262b35; }
```
